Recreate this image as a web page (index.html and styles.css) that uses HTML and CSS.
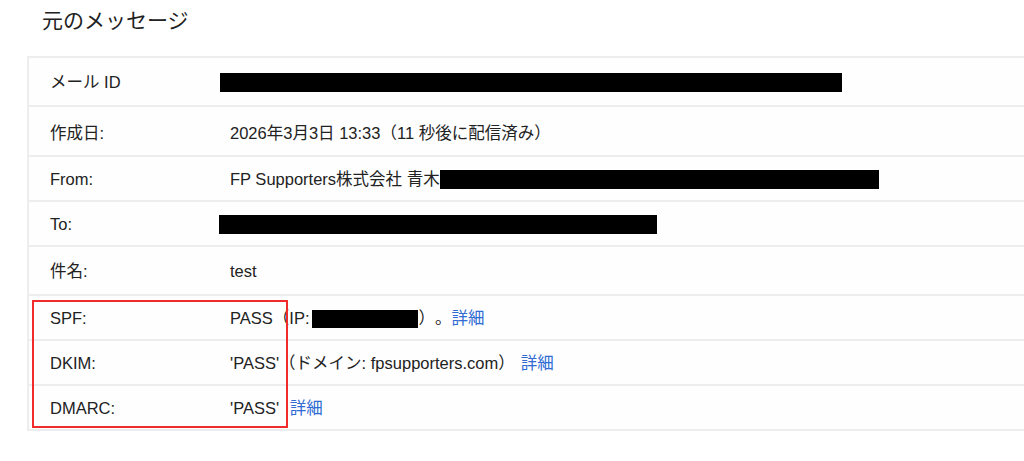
FILE: index.html
```html
<!DOCTYPE html>
<html lang="ja">
<head>
  <meta charset="UTF-8">
  <meta name="viewport" content="width=device-width, initial-scale=1.0">
  <title>元のメッセージ</title>
  <link rel="stylesheet" href="styles.css">
</head>
<body>
  <h1 class="page-title">元のメッセージ</h1>

  <div class="header-table">
    <div class="row row-tall">
      <div class="label">メール ID</div>
      <div class="value"><span class="redact redact-id"></span></div>
    </div>
    <div class="row row-taller">
      <div class="label">作成日:</div>
      <div class="value">2026年3月3日 13:33（11 秒後に配信済み）</div>
    </div>
    <div class="row">
      <div class="label">From:</div>
      <div class="value">FP Supporters株式会社 青木<span class="redact redact-from"></span></div>
    </div>
    <div class="row">
      <div class="label">To:</div>
      <div class="value"><span class="redact redact-to"></span></div>
    </div>
    <div class="row row-tall">
      <div class="label">件名:</div>
      <div class="value">test</div>
    </div>

    <!-- 認証結果 -->
    <div class="auth-group">
      <div class="row">
        <div class="label">SPF:</div>
        <div class="value">PASS（IP:<span class="redact redact-ip"></span>）。<a href="#" class="detail detail-tight">詳細</a></div>
      </div>
      <div class="row">
        <div class="label">DKIM:</div>
        <div class="value">'PASS'（ドメイン: fpsupporters.com）<a href="#" class="detail">詳細</a></div>
      </div>
      <div class="row">
        <div class="label">DMARC:</div>
        <div class="value">'PASS' <a href="#" class="detail">詳細</a></div>
      </div>
      <div class="highlight-box"></div>
    </div>
  </div>
</body>
</html>
```

FILE: styles.css
```css
body {
  font-family: 'Liberation Sans', 'Noto Sans CJK JP', sans-serif;
  color: #222;
  background: #ffffff;
  margin: 0;
  padding: 0;
  text-spacing-trim: space-all;
}

.page-title {
  font-size: 21px;
  font-weight: normal;
  line-height: 24px;
  margin: 0;
  padding: 9px 0 0 42px;
  height: 56px;
  box-sizing: border-box;
}

.header-table {
  margin-left: 27px;
  border-left: 2px solid #ededed;
  border-top: 2px solid #ededed;
  background: #fefefe;
}

.row {
  display: grid;
  grid-template-columns: 201px 1fr;
  align-items: center;
  height: 45px;
  box-sizing: border-box;
  border-bottom: 2px solid #ededed;
  font-size: 16.5px;
  line-height: 20px;
}

.row-tall {
  height: 49px;
}

.row-taller {
  height: 50px;
  padding-top: 3px;
}

.label {
  padding-left: 21px;
}

.value {
  white-space: nowrap;
}

.redact {
  display: inline-block;
  background: #000;
  height: 19px;
  vertical-align: -4px;
}

.redact-id {
  width: 622px;
  margin-left: -10px;
}

.redact-from {
  width: 439px;
}

.redact-to {
  width: 438px;
  margin-left: -11px;
}

.redact-ip {
  width: 106px;
  height: 18px;
  margin-left: 3px;
}

.detail {
  color: #2f6bd3;
  text-decoration: none;
  margin-left: 6px;
}

.detail-tight {
  margin-left: 0;
}

.auth-group {
  position: relative;
}

.highlight-box {
  position: absolute;
  left: 3px;
  top: 4px;
  width: 256px;
  height: 128px;
  border: 2px solid #ef2b2b;
  box-sizing: border-box;
  pointer-events: none;
}
```
